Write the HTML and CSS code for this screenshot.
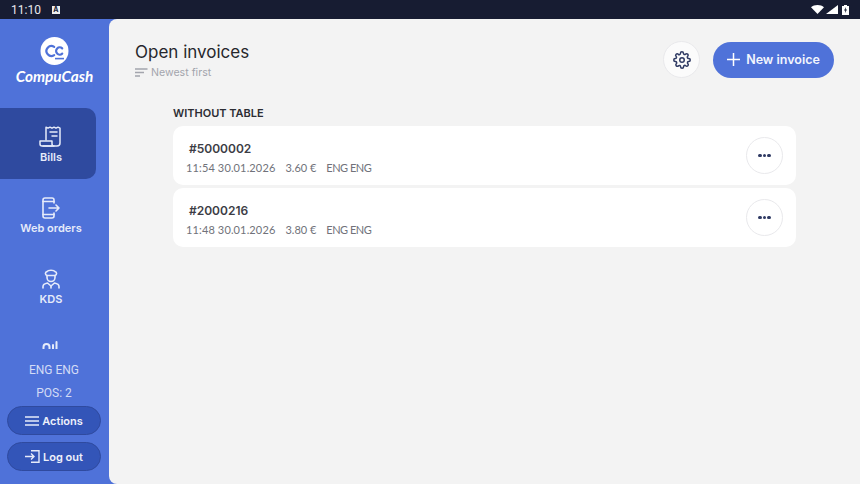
FILE: index.html
```html
<!DOCTYPE html>
<html lang="en">
<head>
    <meta charset="UTF-8">
    <meta name="viewport" content="width=device-width, initial-scale=1.0">
    <title>Open invoices</title>
    <link rel="stylesheet" href="styles.css">
</head>
<body>
    <!-- Status bar -->
    <div class="statusbar">
        <div class="status-left">
            <span class="clock">11:10</span>
            <span class="a-badge">A</span>
        </div>
        <div class="status-right">
            <svg width="13" height="9" viewBox="0 0 13 9"><path d="M0 2.200C1.700.8 3.900 0 6.500 0S11.300.8 13 2.200L6.500 9z" fill="#fff"/></svg>
            <svg width="12" height="9" viewBox="0 0 12 9"><path d="M12 0v9H0z" fill="#fff"/></svg>
            <svg class="battery" width="7" height="10" viewBox="0 0 7 10"><path d="M2 0h3v1h2v9H0V1h2z" fill="#fff"/><path d="M4 2 2 5.500h1.300L3 8 5 4.500H3.700z" fill="#171c32"/></svg>
        </div>
    </div>

    <div class="app">
        <!-- Sidebar -->
        <aside class="sidebar">
            <div class="brand">
                <svg class="brand-logo" width="29" height="28" viewBox="0 0 29 28">
                    <circle cx="14.500" cy="14" r="14" fill="#fff"/>
                    <path d="M14.200 9.800a5 5 0 1 0 0 8.400" fill="none" stroke="#4f72d9" stroke-width="2.200" stroke-linecap="round"/>
                    <path d="M22.200 11.400a3.600 3.600 0 1 0 0 5.200" fill="none" stroke="#4f72d9" stroke-width="2.200" stroke-linecap="round"/>
                    <path d="M15 21.600h9" stroke="#4f72d9" stroke-width="1.600"/>
                </svg>
                <div class="brand-name">CompuCash</div>
            </div>

            <nav class="nav">
                <a class="nav-item active">
                    <svg width="24" height="22" viewBox="0 0 24 22" fill="none" stroke="#e6ebfa" stroke-width="1.500" stroke-linejoin="round" stroke-linecap="round">
                        <path d="M7 14V1.200l2 1 2-1 2 1 2-1 2 1 2-1 2 1V17a3 3 0 0 1-3 3H4"/>
                        <path d="M11 6h7M13 10h5"/>
                        <path d="M1 15h12v3a2 2 0 0 0 2 2H3a2 2 0 0 1-2-2z"/>
                    </svg>
                    <span>Bills</span>
                </a>
                <a class="nav-item">
                    <svg width="18" height="22" viewBox="0 0 18 22" fill="none" stroke="#e6ebfa" stroke-width="1.600" stroke-linejoin="round" stroke-linecap="round">
                        <path d="M12 6V3a2 2 0 0 0-2-2H3a2 2 0 0 0-2 2v16a2 2 0 0 0 2 2h7a2 2 0 0 0 2-2v-3"/>
                        <path d="M1 4.500h11M1 17.500h11"/>
                        <path d="M7 11h10M14 8l3 3-3 3"/>
                    </svg>
                    <span>Web orders</span>
                </a>
                <a class="nav-item">
                    <svg width="18" height="22" viewBox="0 0 18 20" fill="none" stroke="#e6ebfa" stroke-width="1.600" stroke-linejoin="round" stroke-linecap="round">
                        <path d="M5 6.500C3 6 2.800 3 5 2.600 6 .8 12 .8 13 2.600c2.200.4 2 3.400 0 3.900z"/>
                        <path d="M5 6.500v2a4 4 0 0 0 8 0v-2"/>
                        <path d="M1 19v-1.500c0-2 2-3 4.500-3.500L9 17l3.500-3c2.500.5 4.500 1.500 4.500 3.500V19"/>
                        <path d="M9 17v2"/>
                    </svg>
                    <span>KDS</span>
                </a>
                <a class="nav-item">
                    <svg width="18" height="22" viewBox="0 0 18 22" fill="none" stroke="#e6ebfa" stroke-width="2" stroke-linecap="round">
                        <path d="M1.500 10V8a3 3 0 0 1 6 0v2"/>
                        <path d="M11 10V6M14.500 10V3"/>
                    </svg>
                </a>
            </nav>

            <div class="side-foot">
                <div class="side-info">ENG ENG</div>
                <div class="side-info">POS: 2</div>
                <button class="side-btn">
                    <svg width="14" height="10" viewBox="0 0 14 10" stroke="#e6ebfa" stroke-width="1.600"><path d="M0 1h14M0 5h14M0 9h14"/></svg>
                    Actions
                </button>
                <button class="side-btn">
                    <svg width="15" height="13" viewBox="0 0 15 13" fill="none" stroke="#e6ebfa" stroke-width="1.400"><path d="M0 6.500h9M6 3.500l3 3-3 3"/><path d="M6 .7h8v11.600H6"/></svg>
                    Log out
                </button>
            </div>
        </aside>

        <!-- Main area -->
        <main class="main">
            <header class="top">
                <div>
                    <h1 class="title">Open invoices</h1>
                    <div class="sort">
                        <svg width="13" height="9" viewBox="0 0 13 9" stroke="#a3a5ad" stroke-width="1.300"><path d="M0 1h12.500M0 4.500h9M0 8h5"/></svg>
                        Newest first
                    </div>
                </div>
                <div class="top-actions">
                    <button class="round-btn">
                        <svg width="18" height="18" viewBox="0 0 24 24" fill="none" stroke="#2f3a63" stroke-width="2" stroke-linejoin="round">
                            <circle cx="12" cy="12" r="3"/>
                            <path d="M19.400 15a1.650 1.650 0 0 0 .33 1.820l.06.06a2 2 0 1 1-2.830 2.830l-.06-.06a1.650 1.650 0 0 0-2.800 1.170V21a2 2 0 0 1-4 0v-.09A1.650 1.650 0 0 0 7.300 19.740l-.06.06a2 2 0 1 1-2.830-2.830l.06-.06a1.650 1.650 0 0 0-1.170-2.800H3a2 2 0 0 1 0-4h.09A1.650 1.650 0 0 0 4.260 7.300l-.06-.06a2 2 0 1 1 2.830-2.830l.06.06a1.650 1.650 0 0 0 2.800-1.170V3a2 2 0 0 1 4 0v.09a1.650 1.650 0 0 0 2.800 1.170l.06-.06a2 2 0 1 1 2.830 2.830l-.06.06a1.650 1.650 0 0 0 1.170 2.800H21a2 2 0 0 1 0 4h-.09a1.650 1.650 0 0 0-1.510 1z"/>
                        </svg>
                    </button>
                    <button class="new-btn">
                        <svg width="13" height="13" viewBox="0 0 13 13" stroke="#fff" stroke-width="1.500"><path d="M6.500 0v13M0 6.500h13"/></svg>
                        New invoice
                    </button>
                </div>
            </header>

            <section class="invoices">
                <h2 class="group-title">WITHOUT TABLE</h2>
                <div class="invoice">
                    <div class="inv-text">
                        <div class="inv-no">#5000002</div>
                        <div class="inv-meta"><span>11:54 30.01.2026</span><span>3.60 €</span><span>ENG ENG</span></div>
                    </div>
                    <button class="round-btn more"><i></i><i></i><i></i></button>
                </div>
                <div class="invoice">
                    <div class="inv-text">
                        <div class="inv-no">#2000216</div>
                        <div class="inv-meta"><span>11:48 30.01.2026</span><span>3.80 €</span><span>ENG ENG</span></div>
                    </div>
                    <button class="round-btn more"><i></i><i></i><i></i></button>
                </div>
            </section>
        </main>
    </div>
</body>
</html>
```

FILE: styles.css
```css
* {
    box-sizing: border-box;
}

html, body {
    height: 100%;
}

body {
    margin: 0;
    font-family: 'Inter', sans-serif;
    background: #4f72d9;
    overflow: hidden;
    display: flex;
    flex-direction: column;
}

button {
    font-family: inherit;
    cursor: pointer;
}

/* Status bar */
.statusbar {
    height: 19px;
    flex: none;
    background: #171c32;
    color: #e8e8ec;
    display: flex;
    align-items: center;
    justify-content: space-between;
    padding: 0 11px;
}

.status-left {
    display: flex;
    align-items: center;
    gap: 11px;
}

.clock {
    font-family: 'Roboto', sans-serif;
    font-size: 12px;
}

.a-badge {
    width: 8px;
    height: 8px;
    background: #eee;
    color: #171c32;
    font-size: 7px;
    font-weight: 700;
    line-height: 8px;
    text-align: center;
}

.status-right {
    display: flex;
    align-items: center;
    gap: 2px;
}

.battery {
    margin-left: 2px;
}

/* Sidebar */
.app {
    flex: 1;
    display: flex;
    min-height: 0;
}

.sidebar {
    width: 109px;
    flex: none;
    display: flex;
    flex-direction: column;
    color: #e6ebfa;
    min-height: 0;
}

.brand {
    flex: none;
    height: 89px;
    padding-top: 18px;
    display: flex;
    flex-direction: column;
    align-items: center;
}

.brand-name {
    margin-top: 2px;
    font-family: 'Lato', sans-serif;
    font-size: 15.300px;
    font-weight: 700;
    font-style: italic;
    color: #fff;
}

.nav {
    flex: 1;
    min-height: 0;
    overflow: hidden;
}

.nav-item {
    width: 96px;
    height: 71px;
    padding: 18px 0 0 6px;
    display: flex;
    flex-direction: column;
    align-items: center;
    gap: 2px;
    font-size: 11px;
    font-weight: 600;
    border-radius: 0 10px 10px 0;
}

.nav-item.active {
    background: #2f4a9f;
}

.side-foot {
    flex: none;
    display: flex;
    flex-direction: column;
    align-items: center;
    padding: 10px 1px 13px 0;
}

.side-info {
    height: 23px;
    line-height: 23px;
    font-family: 'Roboto', sans-serif;
    font-size: 12px;
    color: #d3dcf6;
}

.side-btn {
    width: 94px;
    height: 29px;
    margin-top: 7px;
    display: flex;
    align-items: center;
    justify-content: center;
    gap: 3px;
    background: #3355b8;
    border: 1px solid #2f4a9f;
    border-radius: 15px;
    color: #eef1fb;
    font-size: 11px;
    font-weight: 600;
}

.side-info + .side-btn {
    margin-top: 1px;
}

/* Main area */
.main {
    flex: 1;
    background: #f3f3f3;
    border-radius: 8px 0 0 8px;
    padding: 23px 26px 0;
    min-width: 0;
}

.top {
    display: flex;
    justify-content: space-between;
    align-items: flex-start;
}

.title {
    margin: 0;
    font-size: 17px;
    font-weight: 400;
    line-height: 20px;
    color: #26272c;
}

.sort {
    margin-top: 4px;
    display: flex;
    align-items: center;
    gap: 3px;
    font-size: 10.600px;
    color: #a3a5ad;
}

.top-actions {
    display: flex;
    align-items: center;
    gap: 13px;
    margin-top: -1px;
}

.round-btn {
    width: 37px;
    height: 37px;
    border-radius: 50%;
    background: #fbfbfb;
    border: 1px solid #e9e9ec;
    display: flex;
    align-items: center;
    justify-content: center;
    padding: 0;
}

.new-btn {
    width: 121px;
    height: 36px;
    padding-top: 1px;
    border: none;
    border-radius: 18px;
    background: #4f72d9;
    color: #f2f5fd;
    font-size: 12.500px;
    font-weight: 600;
    display: flex;
    align-items: center;
    justify-content: center;
    gap: 6px;
}

/* Invoices */
.invoices {
    margin: 27px 38px 0;
}

.group-title {
    margin: 0 0 6px;
    font-size: 11px;
    line-height: 14px;
    font-weight: 600;
    color: #2c2d33;
}

.invoice {
    height: 59px;
    margin-bottom: 3px;
    background: #fff;
    border-radius: 10px;
    display: flex;
    align-items: center;
    justify-content: space-between;
    padding: 0 13px;
}

.inv-text {
    padding-top: 3px;
}

.inv-no {
    padding-left: 3px;
    font-size: 12px;
    font-weight: 600;
    color: #3c3d45;
}

.inv-meta {
    margin-top: 5px;
    display: flex;
    gap: 10px;
    font-family: 'Lato', sans-serif;
    font-size: 11px;
    color: #70727a;
}

.inv-meta span:first-child {
    letter-spacing: 0.13px;
}

.inv-meta span:last-child {
    letter-spacing: -0.5px;
}

.more {
    background: #fff;
    gap: 1px;
}

.more i {
    width: 3.500px;
    height: 3.500px;
    border-radius: 50%;
    background: #2f3a63;
}
```
